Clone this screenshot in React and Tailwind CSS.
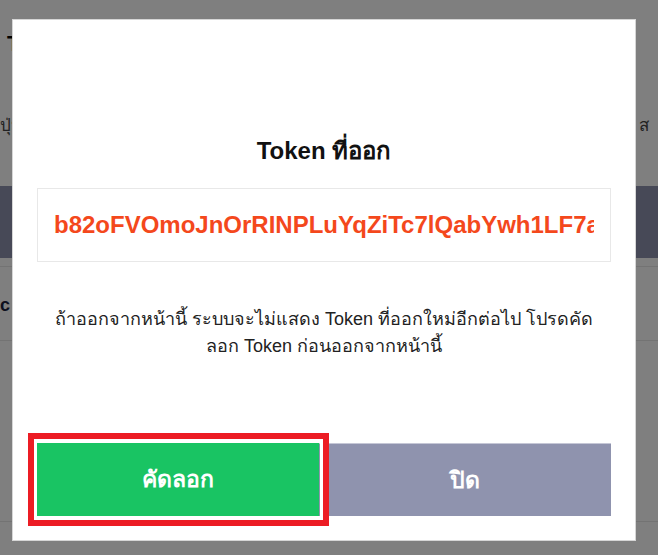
import React from "react";

const font = { fontFamily: '"Liberation Sans", Arial, "Noto Sans", sans-serif' };

export default function App() {
  return (
    <div className="relative w-[658px] h-[555px] overflow-hidden bg-white" style={font}>
      {/* background page */}
      <div className="flex flex-col">
        <div className="pt-[30px] pl-[7px] text-[22px] font-bold text-black leading-[28px]">Token</div>
        <div className="mt-[56px] flex justify-between pl-0 pr-[9px] text-[17px] text-[#444] leading-[24px]">
          <span>ปุ่ม</span>
          <span>ส</span>
        </div>
        <div className="mt-[48px] h-[72px] bg-[#8f93ae]"></div>
        <div className="mt-[8px] h-px bg-[#e6e6e6]"></div>
        <div className="pt-[24px] pb-[21px] text-[18px] font-bold text-[#1a2340] leading-[28px]">c</div>
        <div className="h-px bg-[#e6e6e6]"></div>
        <div className="mt-[180px] h-px bg-[#e6e6e6]"></div>
      </div>

      {/* overlay */}
      <div className="absolute inset-0 bg-black/50"></div>

      {/* modal */}
      <div className="absolute left-[12px] top-[19px] w-[624px] h-[522px] bg-white border border-[#d6d6d6] px-6 pb-6 flex flex-col">
        <div className="mt-[116px] text-center text-[24px] font-bold leading-[30px] text-[#111]">Token ที่ออก</div>
        <div className="mt-[22px] h-[74px] border border-[#e8e8e8] px-4 flex items-center">
          <div className="w-full overflow-hidden">
            <span className="block whitespace-nowrap text-[24px] font-bold text-[#f4481c] leading-[72px]">
              b82oFVOmoJnOrRINPLuYqZiTc7lQabYwh1LF7aXk9dQ
            </span>
          </div>
        </div>
        <p className="mt-[44px] text-center text-[18px] leading-[27px] text-[#222]">
          ถ้าออกจากหน้านี้ ระบบจะไม่แสดง Token ที่ออกใหม่อีกต่อไป โปรดคัด
          <br />
          ลอก Token ก่อนออกจากหน้านี้
        </p>
        <div className="mt-auto relative flex h-[73px]">
          <button className="w-[282px] bg-[#19c463] text-white text-[23px] font-bold flex items-center justify-center">
            คัดลอก
          </button>
          <button className="flex-1 bg-[#8f93ae] border-t border-[#c5c7d6] text-white text-[23px] font-bold flex items-center justify-center">
            ปิด
          </button>
          <div className="absolute left-[-9px] top-[-10px] w-[301px] h-[93px] border-[6px] border-[#ec1c24]">
            <div className="w-full h-full border-[3px] border-white"></div>
          </div>
        </div>
      </div>
    </div>
  );
}
